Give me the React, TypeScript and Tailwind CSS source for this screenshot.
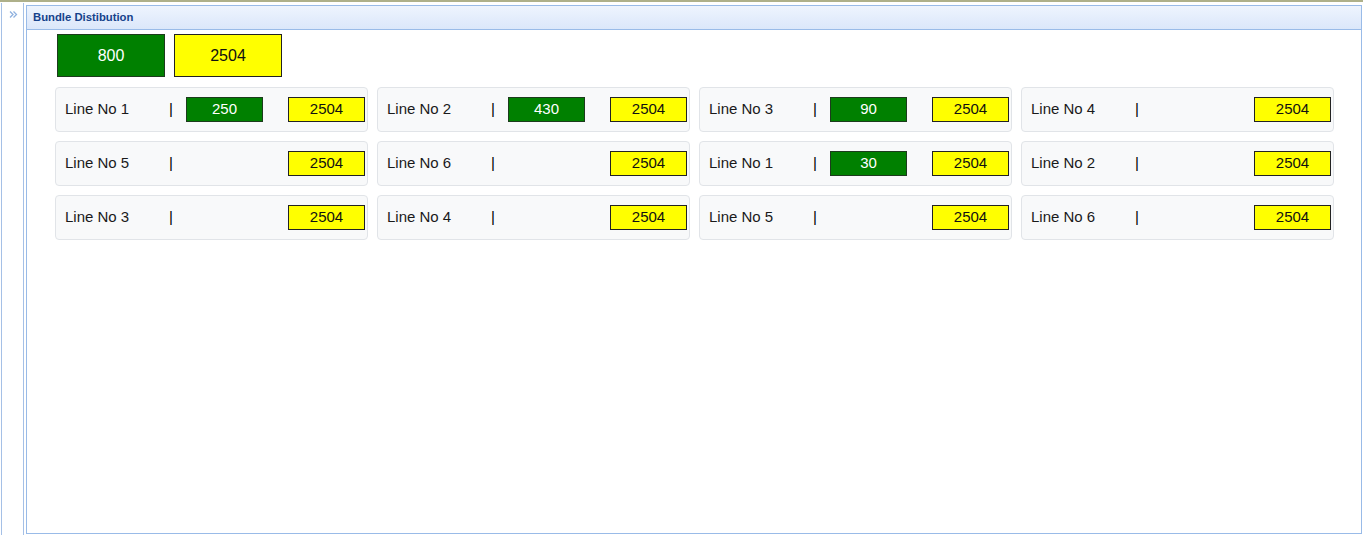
import React from "react";

type Line = { name: string; done?: number };

const lines: Line[] = [
  { name: "Line No 1", done: 250 },
  { name: "Line No 2", done: 430 },
  { name: "Line No 3", done: 90 },
  { name: "Line No 4" },
  { name: "Line No 5" },
  { name: "Line No 6" },
  { name: "Line No 1", done: 30 },
  { name: "Line No 2" },
  { name: "Line No 3" },
  { name: "Line No 4" },
  { name: "Line No 5" },
  { name: "Line No 6" },
];

function LineCard({ line }: { line: Line }) {
  return (
    <div className="flex h-[45px] items-center rounded-[4px] border border-[#e1e4e8] bg-[#f8f9fa] pl-[9px] pr-[2px] text-[15px] text-[#1a1a1a]">
      <span className="w-[104px]">{line.name}</span>
      <span className="w-[17px] text-black">|</span>
      {line.done !== undefined && (
        <div className="flex h-[25px] w-[77px] items-center justify-center border border-[#1d3b1d] bg-[#008000] text-white">
          {line.done}
        </div>
      )}
      <div className="ml-auto flex h-[25px] w-[77px] items-center justify-center border border-[#222] bg-[#ffff00] text-[#111]">
        2504
      </div>
    </div>
  );
}

export default function App() {
  return (
    <div className="flex h-[535px] w-[1363px] flex-col overflow-hidden bg-white font-['Liberation_Sans',Arial,sans-serif]">
      <div className="h-[2px] bg-[#aeb08a]" />
      <div className="flex flex-1">
        {/* collapsed west region */}
        <div className="ml-[1px] mt-[1px] w-[23px] border-x border-[#a5c0e6]">
          <svg className="ml-[7px] mt-[7px]" width="9" height="9" viewBox="0 0 9 9" fill="none" stroke="#8fb1df" strokeWidth="1.3">
            <path d="M1 1.5 L4 4.5 L1 7.5" />
            <path d="M4.5 1.5 L7.5 4.5 L4.5 7.5" />
          </svg>
        </div>

        <div className="mb-[1px] ml-[2px] mr-[1px] mt-[3px] flex flex-1 flex-col border border-[#99bbe8]">
          <div className="flex h-[24px] items-center border-b border-[#99bbe8] bg-gradient-to-b from-[#eef4fe] to-[#dbe7fa] pl-[6px] text-[11.3px] font-bold text-[#15428b]">
            Bundle Distibution
          </div>

          <div className="pl-[28px] pt-[4px]">
            <div className="ml-[2px] flex gap-[9px] text-[16px]">
              <div className="flex h-[43px] w-[108px] items-center justify-center border border-[#1d3b1d] bg-[#008000] text-white">
                800
              </div>
              <div className="flex h-[43px] w-[108px] items-center justify-center border border-[#222] bg-[#ffff00] text-[#111]">
                2504
              </div>
            </div>

            <div className="mt-[10px] grid grid-cols-[repeat(4,313px)] gap-[9px]">
              {lines.map((l, i) => (
                <LineCard key={i} line={l} />
              ))}
            </div>
          </div>
        </div>
      </div>
    </div>
  );
}
